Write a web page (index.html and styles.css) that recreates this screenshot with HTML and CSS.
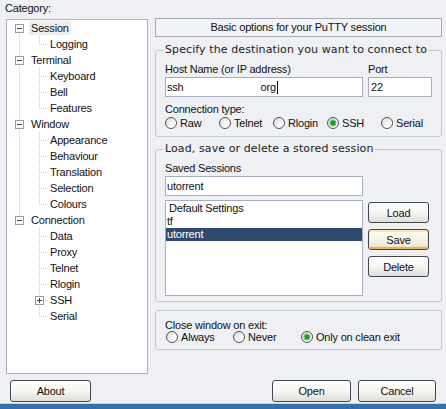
FILE: index.html
```html
<!DOCTYPE html>
<html>
<head>
<meta charset="utf-8">
<title>PuTTY Configuration</title>
<link rel="stylesheet" href="styles.css">
</head>
<body>
<div class="dlg">
  <div class="main">
    <div class="left">
      <div class="cat">Category:</div>
      <div class="tree">
        <div class="r0 first"><svg class="box" width="9" height="9" viewBox="0 0 9 9"><rect x="0.5" y="0.5" width="8" height="8" fill="#fff" stroke="#939ca8"/><path d="M2 4.5h5" stroke="#3a3a3a"/></svg><span class="t sel">Session</span></div>
        <div class="kids cont">
          <div class="r1 last">Logging</div>
        </div>
        <div class="r0"><svg class="box" width="9" height="9" viewBox="0 0 9 9"><rect x="0.5" y="0.5" width="8" height="8" fill="#fff" stroke="#939ca8"/><path d="M2 4.5h5" stroke="#3a3a3a"/></svg><span class="t">Terminal</span></div>
        <div class="kids cont">
          <div class="r1">Keyboard</div>
          <div class="r1">Bell</div>
          <div class="r1 last">Features</div>
        </div>
        <div class="r0"><svg class="box" width="9" height="9" viewBox="0 0 9 9"><rect x="0.5" y="0.5" width="8" height="8" fill="#fff" stroke="#939ca8"/><path d="M2 4.5h5" stroke="#3a3a3a"/></svg><span class="t">Window</span></div>
        <div class="kids cont">
          <div class="r1">Appearance</div>
          <div class="r1">Behaviour</div>
          <div class="r1">Translation</div>
          <div class="r1">Selection</div>
          <div class="r1 last">Colours</div>
        </div>
        <div class="r0 lastroot"><svg class="box" width="9" height="9" viewBox="0 0 9 9"><rect x="0.5" y="0.5" width="8" height="8" fill="#fff" stroke="#939ca8"/><path d="M2 4.5h5" stroke="#3a3a3a"/></svg><span class="t">Connection</span></div>
        <div class="kids">
          <div class="r1">Data</div>
          <div class="r1">Proxy</div>
          <div class="r1">Telnet</div>
          <div class="r1">Rlogin</div>
          <div class="r1 ssh"><svg class="box" width="9" height="9" viewBox="0 0 9 9"><rect x="0.5" y="0.5" width="8" height="8" fill="#fff" stroke="#939ca8"/><path d="M2 4.5h5M4.5 2v5" stroke="#3a3a3a"/></svg><span class="t">SSH</span></div>
          <div class="r1 last">Serial</div>
        </div>
      </div>
    </div>
    <div class="right">
      <div class="title">Basic options for your PuTTY session</div>
      <fieldset class="grp g1">
        <legend>Specify the destination you want to connect to</legend>
        <div class="hostrow">
          <div class="col">
            <div class="lbl">Host Name (or IP address)</div>
            <div class="field host">ssh<span class="blank"></span>org<span class="caret"></span></div>
          </div>
          <div class="col">
            <div class="lbl">Port</div>
            <div class="field port">22</div>
          </div>
        </div>
        <div class="lbl2">Connection type:</div>
        <div class="radios five">
          <div class="rb"><span class="rd"></span>Raw</div>
          <div class="rb"><span class="rd"></span>Telnet</div>
          <div class="rb"><span class="rd"></span>Rlogin</div>
          <div class="rb"><span class="rd on"></span>SSH</div>
          <div class="rb"><span class="rd"></span>Serial</div>
        </div>
      </fieldset>
      <fieldset class="grp g2">
        <legend>Load, save or delete a stored session</legend>
        <div class="lbl first">Saved Sessions</div>
        <div class="sessgrid">
          <div class="field sess">utorrent</div>
          <div></div>
          <div class="list">
            <div class="it indent">Default Settings</div>
            <div class="it">tf</div>
            <div class="it sel">utorrent</div>
          </div>
          <div class="btncol">
            <div class="btn">Load</div>
            <div class="btn focus">Save</div>
            <div class="btn">Delete</div>
          </div>
        </div>
      </fieldset>
      <div class="grp3">
        <div class="lbl3">Close window on exit:</div>
        <div class="radios three">
          <div class="rb"><span class="rd"></span>Always</div>
          <div class="rb"><span class="rd"></span>Never</div>
          <div class="rb"><span class="rd on"></span>Only on clean exit</div>
        </div>
      </div>
    </div>
  </div>
  <div class="foot">
    <div class="btn about">About</div>
    <div class="spacer"></div>
    <div class="btn open">Open</div>
    <div class="btn cancel">Cancel</div>
  </div>
  <div class="strip"></div>
</div>
</body>
</html>
```

FILE: styles.css
```css
* { box-sizing: border-box; }
html, body { margin: 0; padding: 0; }
body {
  width: 446px;
  height: 409px;
  overflow: hidden;
  background: #eef0f4;
  font-family: "Liberation Sans", Arial, sans-serif;
  font-size: 11px;
  letter-spacing: -0.2px;
  color: #111;
}
.dlg { display: flex; flex-direction: column; height: 409px; }
.main { display: flex; height: 376px; }

/* left: category tree */
.left { width: 155px; flex: none; }
.cat { height: 16px; line-height: 16px; padding-left: 5px; }
.tree {
  margin: 3px 0 0 6px;
  width: 142px;
  height: 355px;
  background: #fff;
  border: 1px solid #a9b1be;
}
.r0, .r1 {
  height: 16px;
  display: flex;
  align-items: center;
  white-space: nowrap;
  background-repeat: no-repeat;
}
.r0 {
  padding-left: 8px;
  background-image: repeating-linear-gradient(#c9c9c9 0 1px, transparent 1px 2px);
  background-position: 12px 0;
  background-size: 1px 16px;
}
.r0.first { background-position: 12px 8px; background-size: 1px 8px; }
.r0.lastroot { background-position: 12px 0; background-size: 1px 8px; }
.box { flex: none; margin-right: 7px; display: block; }
.t { padding: 1px 2px; margin-left: -2px; }
.t.sel { background: #ededed; }
.kids.cont {
  background-image: repeating-linear-gradient(#c9c9c9 0 1px, transparent 1px 2px);
  background-position: 12px 0;
  background-size: 1px 100%;
  background-repeat: no-repeat;
}
.r1 {
  padding-left: 43px;
  background-image:
    repeating-linear-gradient(90deg, #c9c9c9 0 1px, transparent 1px 2px),
    repeating-linear-gradient(#c9c9c9 0 1px, transparent 1px 2px);
  background-position: 32px 8px, 32px 0;
  background-size: 9px 1px, 1px 16px;
}
.r1.last { background-size: 9px 1px, 1px 9px; }
.r1.ssh { padding-left: 28px; }
.r1.ssh .box { margin-right: 6px; }
.r1.ssh .t { margin-left: 0; padding: 0; }

/* right panel */
.right { width: 287px; flex: none; padding-top: 18px; }
.title {
  height: 19px;
  line-height: 17px;
  text-align: center;
  border: 1px solid #a7acb4;
  background: #f2f3f6;
}
.grp {
  margin: 0;
  padding: 0 9px 6px;
  min-width: 0;
  border: 1px solid #c2c7cf;
  border-radius: 3px;
}
.g1 { margin-top: 6px; }
.g2 { margin-top: 5px; padding-bottom: 5px; }
.grp legend {
  padding: 0 2px;
  margin-left: -2px;
  line-height: 14px;
  font-family: "DejaVu Sans", Verdana, sans-serif;
  font-size: 11px;
  letter-spacing: 0.1px;
  color: #222;
}
.hostrow { display: flex; gap: 5px; margin-top: 4px; }
.col:first-child { width: 198px; }
.col:last-child { width: 64px; }
.lbl { height: 16px; line-height: 16px; }
.lbl.first { margin-top: 4px; }
.field {
  height: 20px;
  border: 1px solid #a5afbb;
  background: #fff;
  display: flex;
  align-items: center;
  padding-left: 1px;
  white-space: nowrap;
}
.field.port { padding-left: 2px; }
.blank { width: 77px; flex: none; }
.caret { width: 1px; height: 13px; background: #000; margin-left: 1px; flex: none; }
.lbl2 { margin-top: 5px; height: 14px; line-height: 14px; }
.radios { display: grid; height: 14px; }
.radios.five { grid-template-columns: repeat(5, 54px); }
.rb { display: flex; align-items: center; white-space: nowrap; }
.rd {
  width: 12px;
  height: 12px;
  border-radius: 50%;
  border: 1px solid #4b535d;
  background: linear-gradient(135deg, #d9d9d3, #fdfdfb 70%);
  margin-right: 3px;
  flex: none;
}
.rd.on {
  background:
    radial-gradient(circle, #1f9a24 0 2px, #62c466 2.6px 3.2px, transparent 3.8px),
    linear-gradient(135deg, #d9d9d3, #fdfdfb 70%);
}

.sessgrid {
  display: grid;
  grid-template-columns: 198px 61px;
  column-gap: 5px;
  row-gap: 4px;
}
.list {
  height: 96px;
  border: 1px solid #a5afbb;
  background: #fff;
  padding-top: 1px;
}
.it { height: 13px; line-height: 13px; padding-left: 1px; white-space: nowrap; }
.it.indent { padding-left: 3px; }
.it.sel { background: #2f4a6e; color: #fff; }
.btncol { display: flex; flex-direction: column; gap: 6px; padding-top: 2px; }
.btncol .btn { height: 21px; }

.grp3 {
  margin-top: 8px;
  padding: 8px 9px 6px;
  border: 1px solid #c2c7cf;
  border-radius: 3px;
}
.lbl3 { height: 12px; line-height: 12px; }
.radios.three { grid-template-columns: 67px 68px auto; height: 12px; margin-left: 1px; }

.btn {
  height: 22px;
  border: 1px solid #3f4852;
  border-radius: 3px;
  background: linear-gradient(#ffffff, #f4f4f0 55%, #dfded7);
  display: flex;
  align-items: center;
  justify-content: center;
  color: #111;
}
.btn.focus {
  background: linear-gradient(#fffdf5, #f6f1de 60%, #e9e2c9);
  box-shadow: inset 0 1px 0 1px #fde7ae, inset 0 -1px 0 1px #eab24f;
}

.foot { display: flex; margin-top: 4px; height: 22px; }
.about { width: 81px; margin-left: 10px; }
.spacer { flex: 1; }
.open { width: 79px; margin-right: 7px; }
.cancel { width: 78px; margin-right: 10px; }
.strip {
  margin-top: 1px;
  height: 6px;
  border-top: 1px solid #c9d2dd;
  background: #3b6ea8;
}
```
